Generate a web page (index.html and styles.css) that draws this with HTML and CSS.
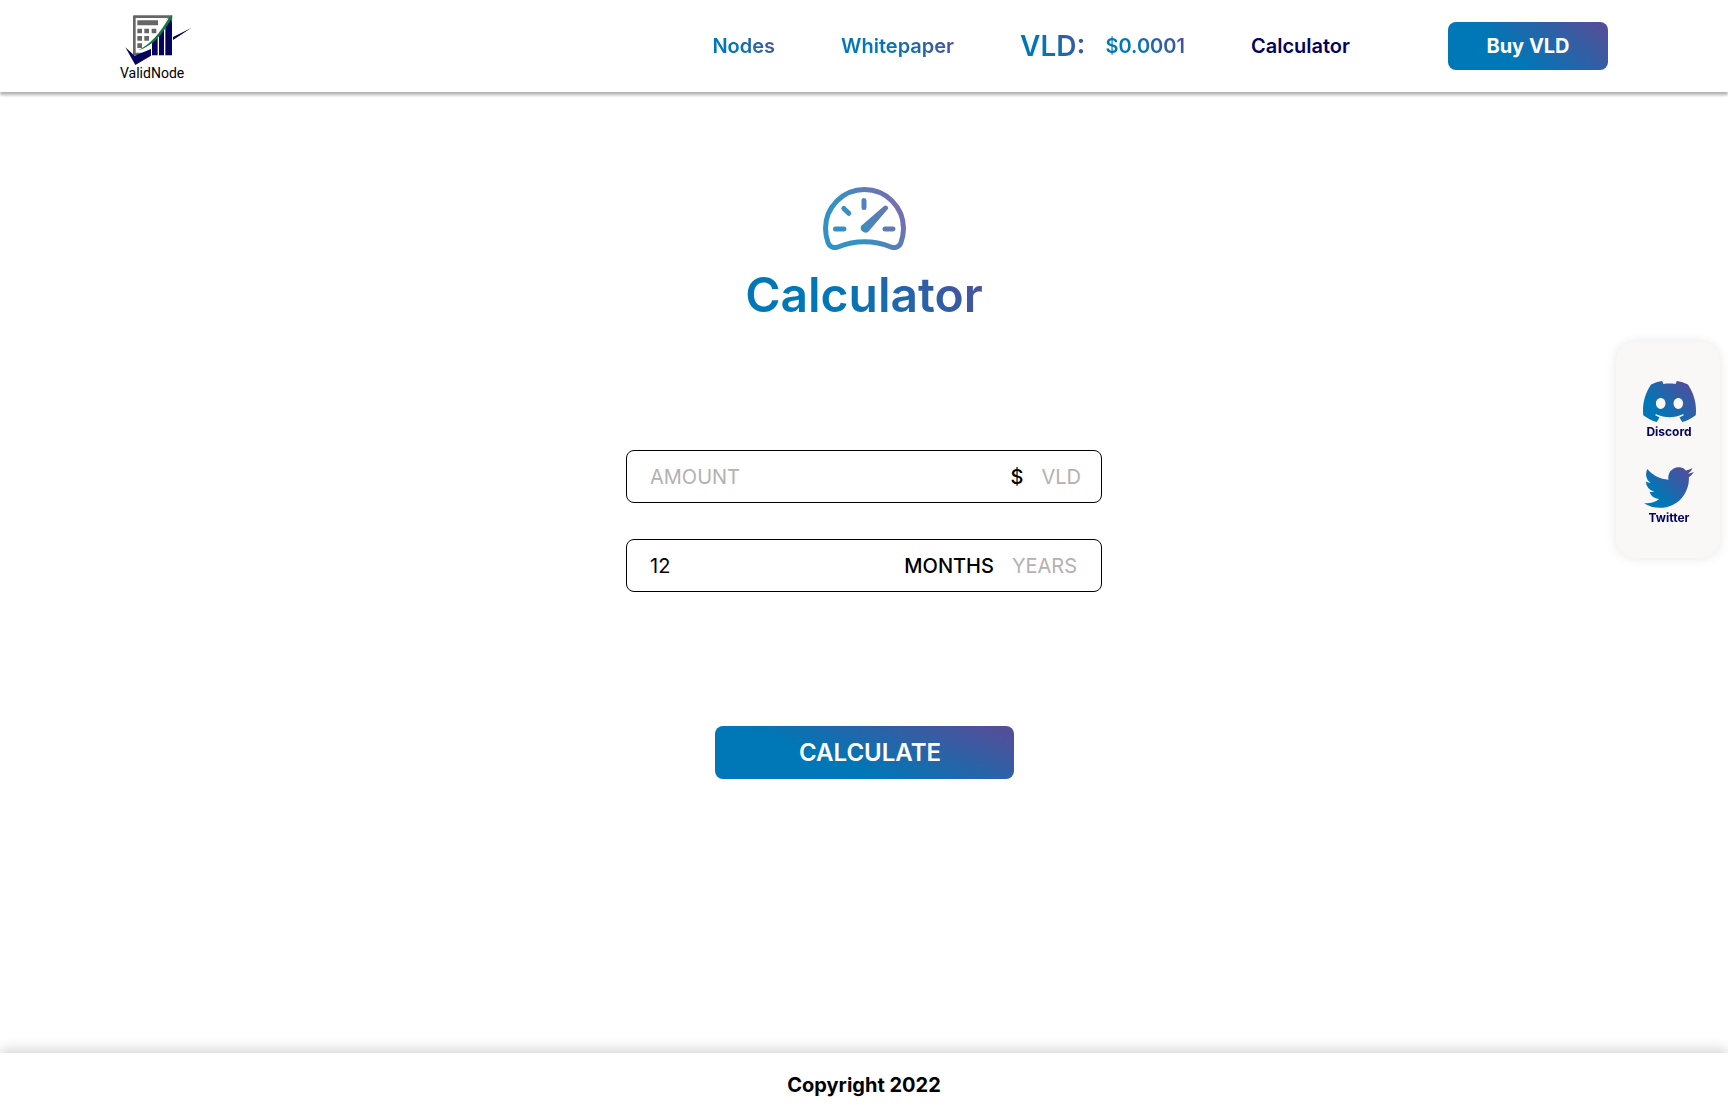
FILE: index.html
```html
<!DOCTYPE html>
<html lang="en">
<head>
<meta charset="utf-8">
<meta name="viewport" content="width=device-width, initial-scale=1">
<title>ValidNode Calculator</title>
<link rel="stylesheet" href="styles.css">
</head>
<body>
<header class="header">
  <a class="logo" href="#">
    <svg class="logo-mark" viewBox="45 28 201 150" aria-hidden="true">
      <path fill="#666" fill-rule="evenodd" d="M72 29H187V149H72Q69 149 69 146V32Q69 29 72 29ZM77 37V141H179V37Z"/>
      <path fill="#666" d="M82 44h62v15H82zM82 69h14v14H82zM103 69h14v14h-14zM125 69h14v14h-14zM82 91h14v14H82zM103 91h14v14h-14zM82 113h14v14H82z"/>
      <path fill="#fff" d="M187 29L152 76 124 108 98 128V150H190V29Z"/>
      <path fill="#04045c" d="M126 110L143 94V149H126ZM147 88L162 70V149H147ZM166 64L186 34V149H166Z"/>
      <path fill="#04045c" d="M46 125L74 150 123 130V150L76 178Z M189 94L245 66 189 103Z"/>
      <path fill="#0b7a43" d="M85 134C124 114 150 82 176 38L166 43 187 29 186 52 182 42C156 88 128 120 85 134Z"/>
    </svg>
    <span>ValidNode</span>
  </a>
  <nav class="nav">
    <a class="nav-link gradient-text" href="#">Nodes</a>
    <a class="nav-link gradient-text" href="#">Whitepaper</a>
    <div class="price">
      <span class="price-label gradient-text">VLD:</span>
      <span class="price-value gradient-text">$0.0001</span>
    </div>
    <a class="nav-link current" href="#" aria-current="page">Calculator</a>
    <button class="buy" type="button">Buy VLD</button>
  </nav>
</header>

<main class="main">
  <svg class="gauge" viewBox="0 0 83 63" aria-hidden="true">
    <defs>
      <linearGradient id="gauge-fill" gradientUnits="userSpaceOnUse" x1="22" y1="56" x2="78" y2="22">
        <stop offset="0.2" stop-color="#0077b6"/>
        <stop offset="1" stop-color="#534c9b"/>
      </linearGradient>
    </defs>
    <g fill="none" stroke="url(#gauge-fill)" stroke-width="5" stroke-linecap="round" opacity="0.8">
      <path d="M41.500 2.500A39 39 0 0 1 80.500 41.500C80.500 46 79.500 51 78 55.500C76.500 60 72 61.500 68 60C50 53 33 53 15 60C11 61.500 6.500 60 5 55.500C3.500 51 2.500 46 2.500 41.500A39 39 0 0 1 41.500 2.500Z"/>
      <path d="M12.500 42L21 42.010M62 42L70 42.010M41 13.500L41.010 20.500M20.800 21.500L25.800 26.300"/>
      <path fill="url(#gauge-fill)" stroke="none" d="M60.500 19.500Q63 17.500 64.500 19.500T64 23L45.500 44.500A4.700 4.700 0 0 1 38.300 38.800Z"/>
    </g>
  </svg>
  <h1 class="title gradient-text">Calculator</h1>

  <form class="form">
    <div class="field amount">
      <input class="field-input" type="text" placeholder="AMOUNT" aria-label="Amount">
      <button class="unit selected" type="button" aria-pressed="true">$</button>
      <button class="unit" type="button" aria-pressed="false">VLD</button>
    </div>
    <div class="field">
      <input class="field-input" type="text" value="12" aria-label="Duration">
      <button class="unit selected" type="button" aria-pressed="true">MONTHS</button>
      <button class="unit" type="button" aria-pressed="false">YEARS</button>
    </div>
    <button class="calculate" type="button">CALCULATE</button>
  </form>
</main>

<aside class="social">
  <a class="social-link" href="#">
    <svg class="discord" viewBox="0 2.850 24 18.300" preserveAspectRatio="none" aria-hidden="true">
      <defs>
        <linearGradient id="social-fill" x1="0.2" y1="0.8" x2="1" y2="0.2">
          <stop offset="0.1" stop-color="#0077b6"/>
          <stop offset="1" stop-color="#534c9b"/>
        </linearGradient>
      </defs>
      <path fill="url(#social-fill)" d="M20.317 4.3698a19.7913 19.7913 0 00-4.8851-1.5152.0741.0741 0 00-.0785.0371c-.211.3753-.4447.8648-.6083 1.2495-1.8447-.2762-3.68-.2762-5.4868 0-.1636-.3933-.4058-.8742-.6177-1.2495a.077.077 0 00-.0785-.037 19.7363 19.7363 0 00-4.8852 1.515.0699.0699 0 00-.0321.0277C.5334 9.0458-.319 13.5799.0992 18.0578a.0824.0824 0 00.0312.0561c2.0528 1.5076 4.0413 2.4228 5.9929 3.0294a.0777.0777 0 00.0842-.0276c.4616-.6304.8731-1.2952 1.226-1.9942a.076.076 0 00-.0416-.1057c-.6528-.2476-1.2743-.5495-1.8722-.8923a.077.077 0 01-.0076-.1277c.1258-.0943.2517-.1923.3718-.2914a.0743.0743 0 01.0776-.0105c3.9278 1.7933 8.18 1.7933 12.0614 0a.0739.0739 0 01.0785.0095c.1202.099.246.1981.3728.2924a.077.077 0 01-.0066.1276 12.2986 12.2986 0 01-1.873.8914.0766.0766 0 00-.0407.1067c.3604.698.7719 1.3628 1.225 1.9932a.076.076 0 00.0842.0286c1.961-.6067 3.9495-1.5219 6.0023-3.0294a.077.077 0 00.0313-.0552c.5004-5.177-.8382-9.6739-3.5485-13.6604a.061.061 0 00-.0312-.0286zM8.02 15.3312c-1.1825 0-2.1569-1.0857-2.1569-2.419 0-1.3332.9555-2.4189 2.157-2.4189 1.2108 0 2.1757 1.0952 2.1568 2.419 0 1.3332-.9555 2.4189-2.1569 2.4189zm7.9748 0c-1.1825 0-2.1569-1.0857-2.1569-2.419 0-1.3332.9554-2.4189 2.1569-2.4189 1.2108 0 2.1757 1.0952 2.1568 2.419 0 1.3332-.946 2.4189-2.1568 2.4189Z"/>
    </svg>
    <span>Discord</span>
  </a>
  <a class="social-link" href="#">
    <svg class="twitter" viewBox="0 2.250 24 19.500" aria-hidden="true">
      <path fill="url(#social-fill)" d="M23.953 4.57a10 10 0 01-2.825.775 4.958 4.958 0 002.163-2.723c-.951.555-2.005.959-3.127 1.184a4.92 4.92 0 00-8.384 4.482C7.69 8.095 4.067 6.13 1.64 3.162a4.822 4.822 0 00-.666 2.475c0 1.71.87 3.213 2.188 4.096a4.904 4.904 0 01-2.228-.616v.06a4.923 4.923 0 003.946 4.827 4.996 4.996 0 01-2.212.085 4.936 4.936 0 004.604 3.417 9.867 9.867 0 01-6.102 2.105c-.39 0-.779-.023-1.17-.067a13.995 13.995 0 007.557 2.209c9.053 0 13.998-7.496 13.998-13.985 0-.21 0-.42-.015-.63A9.935 9.935 0 0024 4.590z"/>
    </svg>
    <span>Twitter</span>
  </a>
</aside>

<footer class="footer">Copyright 2022</footer>
</body>
</html>
```
FILE: styles.css
```css
* { box-sizing: border-box; }

body {
  margin: 0;
  min-height: 100vh;
  display: flex;
  flex-direction: column;
  background: #fff;
  color: #000;
  font-family: Inter, "Liberation Sans", sans-serif;
  font-size: 20px;
  line-height: 24px;
}

a { color: inherit; text-decoration: none; }

button, input {
  margin: 0;
  padding: 0;
  border: 0;
  background: none;
  color: inherit;
  font: inherit;
}

button { cursor: pointer; }

.gradient-text {
  background: linear-gradient(50deg, #0077b6 38%, #534c9b);
  background-clip: text;
  -webkit-background-clip: text;
  color: transparent;
}

.header {
  display: flex;
  align-items: center;
  justify-content: space-between;
  padding: 0 120px;
  height: 92px;
  box-shadow: 0 3px 3px rgba(0, 0, 0, 0.3);
}

.logo {
  display: flex;
  flex-direction: column;
  padding-top: 4px;
  font-family: Roboto, "Liberation Sans", sans-serif;
  font-size: 14px;
  line-height: 16px;
}

.logo-mark {
  width: 67px;
  height: 50px;
  margin-left: 5px;
}

.nav {
  display: flex;
  align-items: center;
  gap: 66px;
  font-weight: 600;
}

.price {
  display: flex;
  align-items: center;
  gap: 20px;
}

.price-label {
  font-size: 28px;
  line-height: 36px;
}

.current { color: #03045e; }

.buy {
  width: 160px;
  height: 48px;
  margin-left: 32px;
  border-radius: 8px;
  background: linear-gradient(40deg, #0077b6 38%, #5a4b96);
  color: #fff;
  font-weight: 700;
}

.main {
  flex: 1;
  display: flex;
  flex-direction: column;
  align-items: center;
  padding: 95px 24px;
}

.gauge {
  width: 83px;
  height: 63px;
}

.title {
  margin: 16px 0 0;
  font-size: 48px;
  line-height: 58px;
  font-weight: 600;
}

.form {
  display: flex;
  flex-direction: column;
  align-items: center;
  gap: 36px;
  width: 100%;
  max-width: 476px;
  margin-top: 126px;
}

.field {
  display: flex;
  align-items: center;
  gap: 18px;
  width: 100%;
  height: 53px;
  padding: 0 24px 0 23px;
  border: 1px solid #000;
  border-radius: 8px;
}

.field.amount { padding-right: 20px; }

.field-input {
  flex: 1;
  min-width: 0;
  outline: 0;
}

.field-input::placeholder, .unit { color: #b4b1b1; opacity: 1; }

.unit.selected {
  color: #000;
  font-weight: 500;
}

.calculate {
  width: 299px;
  height: 53px;
  margin-top: 98px;
  padding-left: 12px;
  border-radius: 8px;
  background: linear-gradient(21deg, #0077b6 38%, #5a4b96);
  color: #fff;
  font-size: 24px;
  font-weight: 600;
}

.social {
  position: fixed;
  top: 342px;
  right: 8px;
  display: flex;
  flex-direction: column;
  gap: 27px;
  width: 104px;
  padding: 39px 0 32px 2px;
  border-radius: 20px;
  background: #f9f8f7;
  box-shadow: 0 0 12px rgba(0, 0, 0, 0.1);
  color: #03045e;
  font-size: 12px;
  line-height: 16px;
  font-weight: 700;
}

.social-link {
  display: flex;
  flex-direction: column;
  align-items: center;
  gap: 2px;
}

.discord { width: 53px; height: 41px; }
.twitter { width: 50px; height: 41px; }

.footer {
  padding: 20px;
  text-align: center;
  font-weight: 700;
  box-shadow: 0 -4px 12px rgba(0, 0, 0, 0.16);
}
```
